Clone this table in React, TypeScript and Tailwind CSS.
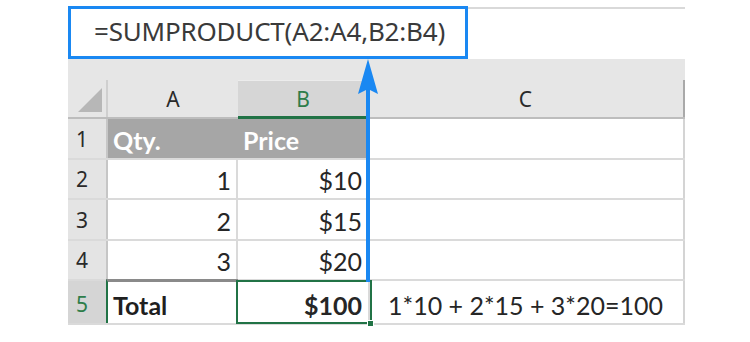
import React from 'react'

const ui = { fontFamily: '"Noto Sans", "Open Sans", sans-serif' }
const cell = { fontFamily: 'Lato, "Liberation Sans", sans-serif' }

type Row = { n: number; a: string; b: string; c?: string; h: string }

const rows: Row[] = [
  { n: 1, a: 'Qty.', b: 'Price', h: 'h-[41px]' },
  { n: 2, a: '1', b: '$10', h: 'h-[40px]' },
  { n: 3, a: '2', b: '$15', h: 'h-[41px]' },
  { n: 4, a: '3', b: '$20', h: 'h-[40px]' },
  { n: 5, a: 'Total', b: '$100', c: '1*10 + 2*15 + 3*20=100', h: 'h-[44px]' },
]

function DataRow({ row }: { row: Row }) {
  const isHead = row.n === 1
  const isTotal = row.n === 5
  return (
    <div className={`grid grid-cols-[40px_130px_130px_317px] ${row.h} border-b-2 border-[#dadada]`}>
      {/* row number */}
      <div
        className={`flex items-end pb-[3px] pl-[8px] text-[21px] border-r-2 border-[#c6c6c6] ${
          isTotal ? 'bg-[#d5d5d5] text-[#2e7d4a]' : 'bg-[#e4e4e4] text-[#2a2a2a]'
        }`}
        style={ui}
      >
        {row.n}
      </div>

      {/* A */}
      <div
        className={`flex items-end pb-[2px] text-[25px] leading-[32px] ${
          isHead
            ? 'bg-[#a6a6a6] text-white font-bold pl-[5px]'
            : isTotal
              ? 'font-bold pl-[5px] text-[#1f1f1f] border-l-2 border-[#217346] border-t-[3px] border-t-[#8a8a8a] -ml-[2px] -mt-[2px]'
              : 'justify-end pr-[5px] text-[#262626] border-r-2 border-[#dadada]'
        }`}
        style={cell}
      >
        {row.a}
      </div>

      {/* B */}
      <div
        className={`relative flex items-end pb-[2px] text-[25px] leading-[32px] ${
          isHead ? 'bg-[#a6a6a6] text-white font-bold pl-[5px]' : 'justify-end pr-[6px] text-[#262626]'
        } ${isTotal ? 'font-bold' : ''}`}
        style={cell}
      >
        {row.b}
        {isTotal && (
          <>
            <div className="absolute -left-[2px] -top-[1px] -right-[4px] -bottom-[1px] border-2 border-[#217346]" />
            <div className="absolute -right-[6px] -bottom-[4px] w-[7px] h-[7px] bg-[#217346] border border-white" />
          </>
        )}
      </div>

      {/* C */}
      <div
        className="flex items-end pb-[2px] pl-[18px] text-[25px] leading-[32px] text-[#262626] border-r-2 border-[#d4d4d4] border-l-2 border-l-[#dadada]"
        style={cell}
      >
        {row.c}
      </div>
    </div>
  )
}

export default function App() {
  return (
    <div className="relative w-[750px] h-[342px] bg-white pt-[6px] pl-[68px] overflow-hidden">
      <div className="w-[617px]">
        {/* Formula bar */}
        <div className="flex h-[53px]">
          <div
            className="w-[400px] border-[3px] border-[#1a88f2] flex items-center pl-[23px] pb-[2px] text-[26px] tracking-[-0.2px] text-[#3a3a3a] bg-white whitespace-nowrap"
            style={ui}
          >
            =SUMPRODUCT(A2:A4,B2:B4)
          </div>
          <div className="flex-1 mt-px border-t-2 border-[#d9d9d9]" />
        </div>

        {/* Ribbon gap */}
        <div className="h-[21px] bg-[#e6e6e6]" />

        {/* Column headers */}
        <div
          className="grid grid-cols-[40px_130px_130px_317px] h-[39px] bg-[#e6e6e6] border-b-2 border-[#bdbdbd] text-[21px] text-[#2a2a2a]"
          style={ui}
        >
          <div className="relative border-r-2 border-[#cfcfcf]">
            <svg className="absolute left-[10px] top-[8px]" width="24" height="24" viewBox="0 0 24 24">
              <polygon points="24,0 24,24 0,24" fill="#b7b7b7" />
            </svg>
          </div>
          <div className="flex items-center justify-center pt-[2px]">A</div>
          <div className="flex items-center justify-center pt-[2px] bg-[#d6d6d6] border-t border-[#ececec] text-[#2e7d4a] border-b-[3px] border-b-[#217346] -mb-[2px]">
            B
          </div>
          <div className="flex items-center justify-center pt-[2px] border-r-2 border-[#a9a9a9]">C</div>
        </div>

        {rows.map(r => (
          <DataRow key={r.n} row={r} />
        ))}
      </div>

      {/* Blue arrow */}
      <svg className="absolute left-[356px] top-[58px]" width="24" height="225" viewBox="0 0 24 225">
        <rect x="10" y="28" width="4" height="196" fill="#1a88f2" />
        <polygon points="12,1 22,36 12,31 2,36" fill="#1a88f2" />
      </svg>
    </div>
  )
}
